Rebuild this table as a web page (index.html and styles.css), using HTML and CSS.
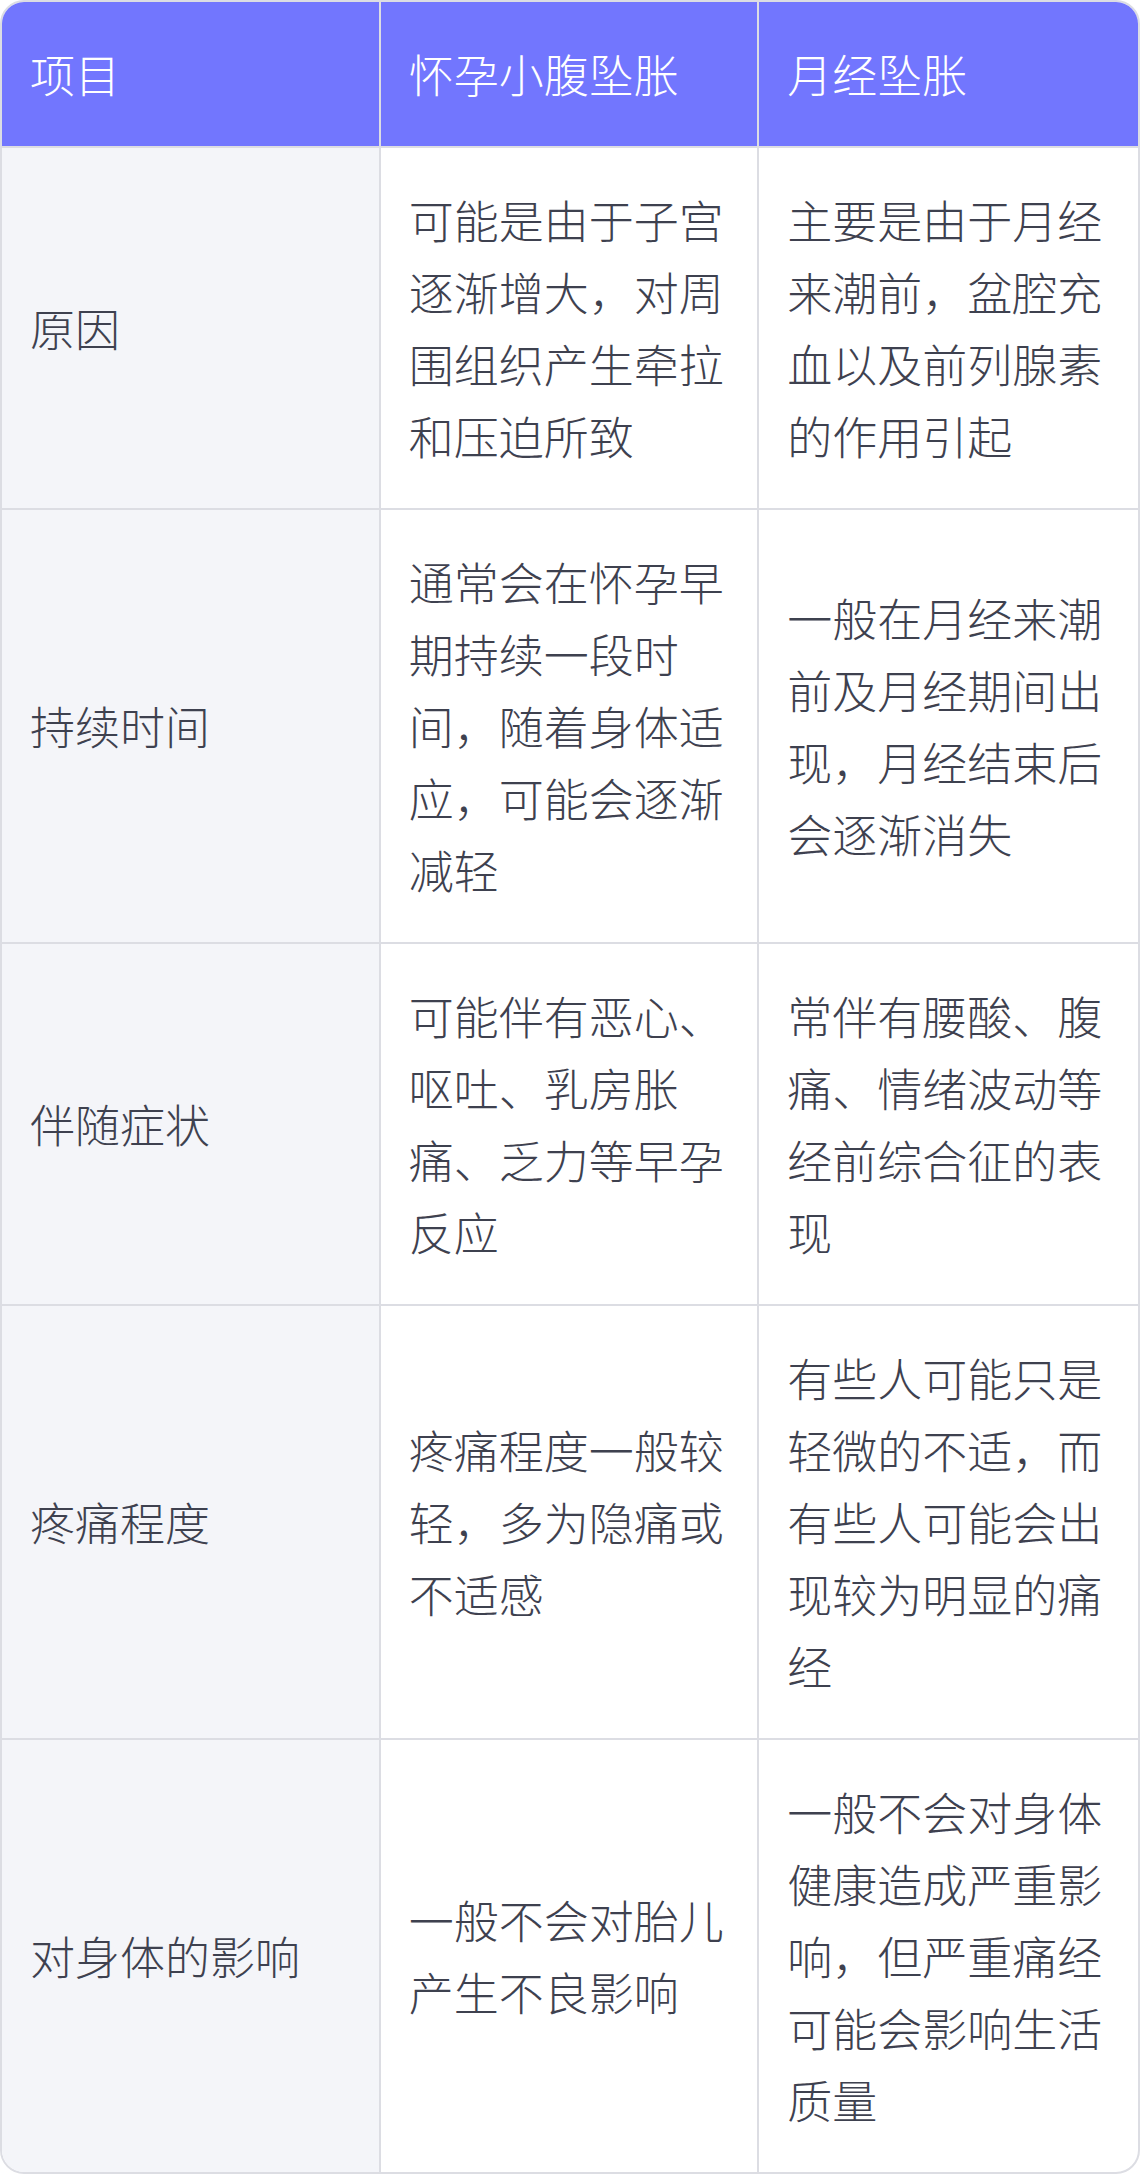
FILE: index.html
```html
<!DOCTYPE html>
<html>
 <head>
  <meta charset="utf-8">
  <title>怀孕小腹坠胀与月经坠胀</title>
  <link rel="stylesheet" href="styles.css">
 </head>
 <body>
  <div class="compare">
   <table>
    <thead>
     <tr>
      <th>项目</th>
      <th>怀孕小腹坠胀</th>
      <th>月经坠胀</th>
     </tr>
    </thead>
    <tbody>
     <tr>
      <td>原因</td>
      <td>可能是由于子宫逐渐增大，对周围组织产生牵拉和压迫所致</td>
      <td>主要是由于月经来潮前，盆腔充血以及前列腺素的作用引起</td>
     </tr>
     <tr>
      <td>持续时间</td>
      <td>通常会在怀孕早期持续一段时间，随着身体适应，可能会逐渐减轻</td>
      <td>一般在月经来潮前及月经期间出现，月经结束后会逐渐消失</td>
     </tr>
     <tr>
      <td>伴随症状</td>
      <td>可能伴有恶心、呕吐、乳房胀痛、乏力等早孕反应</td>
      <td>常伴有腰酸、腹痛、情绪波动等经前综合征的表现</td>
     </tr>
     <tr>
      <td>疼痛程度</td>
      <td>疼痛程度一般较轻，多为隐痛或不适感</td>
      <td>有些人可能只是轻微的不适，而有些人可能会出现较为明显的痛经</td>
     </tr>
     <tr>
      <td>对身体的影响</td>
      <td>一般不会对胎儿产生不良影响</td>
      <td>一般不会对身体健康造成严重影响，但严重痛经可能会影响生活质量</td>
     </tr>
    </tbody>
   </table>
  </div>
 </body>
</html>
```

FILE: styles.css
```css
body {
 margin:      0;
 background:  #ffffff;
 font-family: "Noto Sans CJK SC", "Noto Sans", sans-serif;
}

.compare {
 border:        2px solid #dcdde3;
 border-radius: 24px;
 overflow:      hidden;
}

table {
 width:           100%;
 table-layout:    fixed;
 border-collapse: separate;
 border-spacing:  0;
}

th, td {
 padding:        36px 28px;
 font-size:      45px;
 line-height:    72px;
 font-weight:    300;
 text-align:     left;
 vertical-align: middle;
 color:          #3e414f;
 border-right:   2px solid #dcdde3;
 border-bottom:  2px solid #dcdde3;
}

th:last-child,
td:last-child {
 border-right: 0;
}

tbody tr:last-child td {
 border-bottom: 0;
}

th {
 background: #7276fe;
 color:      #ffffff;
}

td:first-child {
 background: #f4f5f9;
}
```
